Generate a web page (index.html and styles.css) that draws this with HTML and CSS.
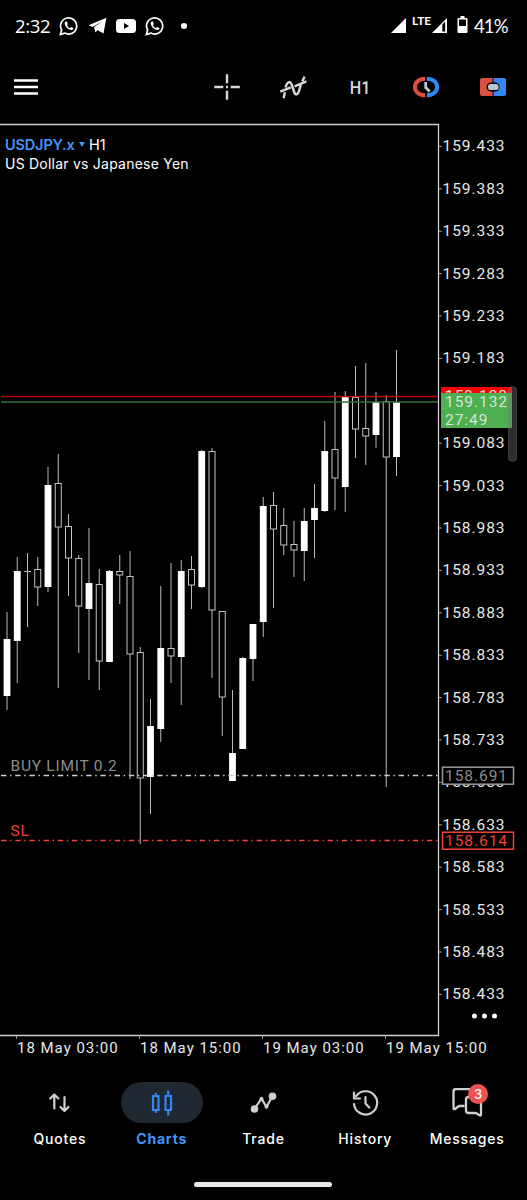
FILE: index.html
```html
<!DOCTYPE html>
<html lang="en">
<head>
    <meta charset="UTF-8">
    <meta name="viewport" content="width=device-width, initial-scale=1.0">
    <title>USDJPY.x H1</title>
    <link rel="stylesheet" href="styles.css">
</head>
<body>
    <div class="status-bar">
        <span class="clock">2:32</span>
        <svg class="whatsapp" width="20" height="20" viewBox="0 0 20 20"><path d="M1.4 18.4l1.2-4.4a8.1 8.1 0 1 1 3.2 3.1z" fill="none" stroke="#fff" stroke-width="1.7"/><path d="M7 5.4c-.9.3-1.5 1.2-1.3 2.3.6 3.3 3.2 5.8 6.4 6.4 1.2.1 2.2-.6 2.4-1.5l-.1-.7-2.2-1-1.2 1.2c-1.5-.6-2.5-1.6-3.1-2.9l.9-1.2-.9-2.4z" fill="#fff"/></svg>
        <svg class="telegram" width="19" height="18" viewBox="0 0 19 18"><path d="M.5 8.3L18.4.7 15.5 16.5 9.5 12.9 7.5 15.5 6 10.3 14 4.5 4.6 10z" fill="#fff"/></svg>
        <svg class="youtube" width="20" height="14" viewBox="0 0 20 14"><rect width="20" height="14" rx="3.5" fill="#fff"/><path d="M8 4l5 3-5 3z" fill="#000"/></svg>
        <svg class="whatsapp" width="20" height="20" viewBox="0 0 20 20"><path d="M1.4 18.4l1.2-4.4a8.1 8.1 0 1 1 3.2 3.1z" fill="none" stroke="#fff" stroke-width="1.7"/><path d="M7 5.4c-.9.3-1.5 1.2-1.3 2.3.6 3.3 3.2 5.8 6.4 6.4 1.2.1 2.2-.6 2.4-1.5l-.1-.7-2.2-1-1.2 1.2c-1.5-.6-2.5-1.6-3.1-2.9l.9-1.2-.9-2.4z" fill="#fff"/></svg>
        <span class="more-dot"></span>
        <div class="status-right">
            <svg width="15" height="15" viewBox="0 0 15 15"><path d="M0 15L15 0v15z" fill="#fff"/></svg>
            <span class="lte">LTE</span>
            <svg width="15" height="15" viewBox="0 0 15 15"><path d="M0 15L15 0v15z" fill="#fff"/><path d="M10.3 6.500L13.200 3.600V13.500H10.300z" fill="#000"/></svg>
            <svg class="battery" width="11" height="17" viewBox="0 0 11 17"><path d="M3.500 0h4v2H9.500Q10.500 2 10.500 3V16Q10.500 17 9.500 17H1.500Q.5 17 .5 16V3Q.5 2 1.500 2h2z" fill="#fff"/><path d="M2 3.500h7V10H2z" fill="#000"/></svg>
            <span class="percent">41%</span>
        </div>
    </div>

    <div class="toolbar">
        <svg width="24" height="28" viewBox="0 0 24 28"><path d="M0 7.500h24M0 14h24M0 20.500h24" stroke="#fff" stroke-width="2.400"/></svg>
        <div class="tools">
            <svg width="28" height="28" viewBox="0 0 28 28"><path d="M14 1.200v9.100M14 17.700v9.100M1.200 14h9.100M17.700 14h9.100M13 14h2" stroke="#d8d8d8" stroke-width="2.400"/></svg>
            <svg width="28" height="28" viewBox="0 0 28 28" fill="none" stroke="#d8d8d8" stroke-width="2.400"><path d="M4.600 25.200l1.300-6M6.500 14.500C8.500 8 11.300 7.500 13 12.500L15 18.500c1.600 4.500 4 3.500 5.300-1.500l1.500-5.500M23.200 8.300l2.500-4.700M1.300 18.600l10.500-4.200M15.600 13.300l11.800-4.900"/></svg>
            <span class="period">H1</span>
            <svg width="28" height="28" viewBox="0 0 28 28" fill="none"><path d="M13.200 5.800C-.5 5.800-.5 22.200 13.200 22.200" stroke="#dc5043" stroke-width="4"/><path d="M14.800 5.800C28.500 5.800 28.500 22.200 14.800 22.200" stroke="#3187f3" stroke-width="4"/><path d="M13.700 9v5.600l4 4" stroke="#b8c6ce" stroke-width="2.800"/></svg>
            <svg width="28" height="28" viewBox="0 0 28 28"><path d="M3 5h10.500v18H3q-2 0-2-2V7q0-2 2-2z" fill="#dc5043"/><path d="M14.500 5H25q2 0 2 2v14q0 2-2 2H14.500z" fill="#3187f3"/><rect x="7.500" y="9.500" width="13" height="9" rx="4.500" fill="#000"/><rect x="9" y="11" width="10.500" height="6" rx="2.500" fill="#b8c6ce"/></svg>
        </div>
    </div>

    <div class="chart">
        <svg id="plot" width="527" height="948" viewBox="0 122 527 948">
            <g id="candles"></g>
            <path class="ask-line" d="M1 396.500h437"/>
            <path class="bid-line" d="M1 402h437"/>
            <path class="limit-line" d="M1 775.500h437"/>
            <path class="sl-line" d="M1 840.500h437"/>
            <text class="order name" x="10.500" y="771">BUY LIMIT 0.2</text>
            <text class="order name sl" x="10.500" y="836">SL</text>
            <path class="frame" d="M0 124.500h438.500v911H0"/>
            <g id="prices"></g>
            <g id="times"></g>
            <rect x="441" y="387" width="71" height="20" fill="#f00"/>
            <text class="tag" x="445" y="401">159.138</text>
            <rect x="441" y="393" width="71" height="35" fill="#4caf50"/>
            <text class="tag" x="445" y="407">159.132</text>
            <text class="tag" x="445" y="424.500">27:49</text>
            <rect x="442.500" y="767.200" width="71" height="17" fill="#000" stroke="#999" stroke-width="1.500"/>
            <text class="order" x="445" y="781">158.691</text>
            <rect x="442.500" y="832.200" width="71" height="17" fill="#000" stroke="#f44336" stroke-width="1.500"/>
            <text class="order sl" x="445" y="846">158.614</text>
            <rect x="508.500" y="386.500" width="8" height="75" rx="4" fill="#777" fill-opacity=".38" stroke="#777" stroke-opacity=".4"/>
            <g fill="#fff"><circle cx="474.500" cy="1016" r="2.500"/><circle cx="484.500" cy="1016" r="2.500"/><circle cx="494.500" cy="1016" r="2.500"/></g>
        </svg>
        <div class="symbol">
            <div><b>USDJPY.x</b><i></i><span>H1</span></div>
            <div class="description">US Dollar vs Japanese Yen</div>
        </div>
    </div>

    <nav class="tabs">
        <div class="tab">
            <div class="icon"><svg width="30" height="30" viewBox="0 0 30 30" fill="none" stroke="#d0d0d0" stroke-width="2.200" stroke-linecap="round" stroke-linejoin="round"><path d="M9.300 20.500V7M5.300 10.500l4-4 4 4M19.500 9v13.500M15.500 19l4 4 4-4"/></svg></div>
            <span>Quotes</span>
        </div>
        <div class="tab active">
            <div class="icon"><svg width="30" height="30" viewBox="0 0 30 30" fill="none" stroke="#3187f3" stroke-width="2.200"><path d="M6 8h5.500v14H6zM18.500 8h5.500v14h-5.500zM8.750 5v3M8.750 22v3M21.250 2.500v5.500M21.250 22v5.500"/></svg></div>
            <span>Charts</span>
        </div>
        <div class="tab">
            <div class="icon"><svg width="30" height="30" viewBox="0 0 30 30" fill="none" stroke="#d0d0d0" stroke-width="2.200"><path d="M6.500 21L13.500 10.500l5 8.500 5.500-10"/><g fill="#d0d0d0" stroke="none"><circle cx="6.500" cy="21" r="3.800"/><circle cx="24.500" cy="8.200" r="3.800"/><circle cx="13.500" cy="11" r="2"/><circle cx="18.500" cy="18.500" r="2"/></g></svg></div>
            <span>Trade</span>
        </div>
        <div class="tab">
            <div class="icon"><svg width="30" height="30" viewBox="0 0 30 30" fill="none" stroke="#d0d0d0" stroke-width="2.200" stroke-linecap="round" stroke-linejoin="round"><path d="M4 16A11.600 11.600 0 1 0 6.200 8M4 4.500v6h6M15.500 9V15.500l3.700 4"/></svg></div>
            <span>History</span>
        </div>
        <div class="tab">
            <div class="icon"><svg width="34" height="30" viewBox="0 0 34 30" fill="none" stroke="#d0d0d0" stroke-width="2.300" stroke-linejoin="round"><path d="M14.500 18H9l-4 3q-1.500.7-1.500-1V3.500q0-2.500 2.500-2.500H20.500M31 13.500v13q0 1.500-1.500.7L26 25H18.500q-2.500 0-2.500-2.500V11.500q0-2.500 2.500-2.500H28.500q2.500 0 2.500 2.500"/></svg><em>3</em></div>
            <span>Messages</span>
        </div>
    </nav>
    <div class="home-bar"></div>

    <script src="script.js"></script>
</body>
</html>
```

FILE: styles.css
```css
body {
    margin: 0;
    width: 527px;
    height: 1200px;
    overflow: hidden;
    display: flex;
    flex-direction: column;
    background-color: #000;
    color: #fff;
    font-family: Inter, "Open Sans", sans-serif;
}
svg {
    display: block;
    flex: none;
}
.status-bar {
    height: 50px;
    display: flex;
    align-items: center;
    padding: 1px 20px 0 15px;
    box-sizing: border-box;
}
.clock {
    width: 36px;
    margin-right: 8px;
    font-family: "Open Sans", sans-serif;
    font-size: 18.5px;
    letter-spacing: -0.3px;
}
.telegram {
    margin-left: 9px;
}
.youtube {
    margin: 0 9px 0 9px;
}
.more-dot {
    width: 6px;
    height: 6px;
    margin-left: 16px;
    border-radius: 50%;
    background-color: #fff;
}
.status-right {
    margin-left: auto;
    display: flex;
    align-items: center;
}
.lte {
    width: 20px;
    margin: -9px 0 0 6px;
    font-family: Lato, sans-serif;
    font-size: 12px;
    font-weight: bold;
    line-height: 12px;
}
.battery {
    margin: 0 6px 2px 10px;
}
.percent {
    width: 33px;
    font-family: Lato, sans-serif;
    font-size: 18.5px;
    letter-spacing: -0.9px;
}
.toolbar {
    height: 72px;
    display: flex;
    align-items: center;
    justify-content: space-between;
    padding: 2px 20px 0 14px;
    box-sizing: border-box;
}
.tools {
    display: flex;
    align-items: center;
    gap: 38.6px;
}
.period {
    width: 28px;
    text-align: center;
    font-family: Roboto, sans-serif;
    font-size: 19px;
    font-weight: 500;
    color: #d8d8d8;
    transform: scaleX(0.85);
}

/* chart */
.chart {
    position: relative;
    height: 948px;
}
#plot text {
    font-family: Roboto, sans-serif;
    font-size: 15.5px;
    letter-spacing: 0.95px;
    fill: #e8e8e8;
}
#plot #times text {
    font-size: 15px;
    letter-spacing: 0.98px;
}
#plot .order {
    fill: #8c8c8c;
}
#plot .name {
    letter-spacing: 0.75px;
}
#plot .sl {
    fill: #ea4034;
}
#plot .tag {
    fill: #d9e3da;
}
.frame {
    fill: none;
    stroke: #d0d0d0;
    stroke-width: 1.3;
}
.tick {
    stroke: #999;
}
.wick {
    stroke: #bbb;
    stroke-width: 1;
}
.up {
    fill: #fff;
}
.down {
    fill: #000;
    stroke: #c4c4c4;
    stroke-width: 1;
}
.ask-line {
    stroke: #b40000;
    stroke-width: 1.3;
}
.bid-line {
    stroke: #2e7032;
    stroke-width: 1.3;
}
.limit-line, .sl-line {
    stroke: #ccc;
    stroke-width: 1.4;
    stroke-dasharray: 5.4 3.7 1.4 3.7;
}
.sl-line {
    stroke: #f44336;
}
.symbol {
    position: absolute;
    left: 5px;
    top: 13px;
    font-size: 14.5px;
    line-height: 19px;
    white-space: nowrap;
}
.symbol > div {
    display: flex;
    align-items: center;
}
.symbol b {
    width: 70px;
    color: #4396fa;
    font-weight: 600;
    letter-spacing: -0.15px;
}
.symbol i {
    margin: 0 4px;
    border: 3px solid transparent;
    border-top: 5px solid #4396fa;
    border-bottom: 0;
}
.symbol .description {
    font-size: 14px;
    letter-spacing: 0.23px;
}

/* bottom navigation */
.tabs {
    height: 100px;
    display: flex;
    padding: 12px 9px 0;
    box-sizing: border-box;
}
.tab {
    flex: 1;
    display: flex;
    flex-direction: column;
    align-items: center;
    font-size: 14px;
    font-weight: 500;
    letter-spacing: 0.8px;
}
.icon {
    position: relative;
    width: 82px;
    height: 41px;
    margin-bottom: 7px;
    border-radius: 21px;
    display: flex;
    align-items: center;
    justify-content: center;
}
.active {
    color: #4396fa;
    font-weight: 700;
}
.active .icon {
    background-color: #202832;
}
.icon em {
    position: absolute;
    left: 42px;
    top: 2px;
    width: 20px;
    height: 20px;
    border-radius: 50%;
    background-color: #ef5350;
    font-size: 13px;
    font-style: normal;
    line-height: 21px;
    text-align: center;
    letter-spacing: 0;
}
.home-bar {
    width: 138px;
    height: 5px;
    margin: 12px 0 0 194px;
    border-radius: 3px;
    background-color: #e8e8e8;
}
```

FILE: script.js
```js
// high, low, body top, body bottom, 1 = up
const candles = [
    [612, 710, 639, 696, 1], [557, 683, 571, 641, 1], [553, 627, 571, 572, 0],
    [557, 606, 569, 587, 0], [467, 592, 485, 587, 1], [454, 688, 483, 527, 0],
    [514, 596, 526, 558, 0], [555, 653, 558, 606, 0], [528, 680, 583, 609, 1],
    [569, 690, 584, 661, 0], [570, 662, 571, 662, 1], [555, 604, 571, 575, 0],
    [551, 779, 576, 654, 0], [647, 844, 652, 778, 0], [699, 814, 726, 777, 1],
    [586, 742, 648, 729, 1], [563, 683, 648, 656, 0], [560, 705, 571, 657, 1],
    [556, 609, 569, 585, 0], [450, 588, 451, 587, 1], [448, 678, 451, 610, 0],
    [611, 736, 611, 697, 0], [690, 781, 753, 781, 1], [657, 749, 658, 749, 1],
    [624, 681, 624, 659, 1], [497, 637, 506, 622, 1], [492, 608, 505, 529, 0],
    [508, 555, 525, 545, 0], [521, 577, 544, 550, 0], [508, 581, 521, 551, 1],
    [484, 558, 508, 520, 1], [421, 512, 451, 511, 1], [392, 510, 449, 478, 0],
    [391, 512, 396, 487, 1], [366, 458, 397, 429, 0], [363, 465, 428, 436, 0],
    [392, 448, 402, 435, 1], [395, 787, 401, 457, 0], [350, 476, 402, 457, 1]
];

let html = '';
candles.forEach(([high, low, top, bottom, up], i) => {
    const x = 7 + i * 10.25;
    html += `<path class="wick" d="M${x} ${high}V${low}"/>`;
    if (up) {
        html += `<rect class="up" x="${x - 3.4}" y="${top}" width="6.8" height="${bottom - top}"/>`;
    } else if (bottom - top < 2) {
        html += `<path class="wick" d="M${x - 3.4} ${top + 0.5}h6.8"/>`;
    } else {
        html += `<rect class="down" x="${x - 3}" y="${top + 0.5}" width="6" height="${bottom - top - 0.5}"/>`;
    }
});
document.getElementById('candles').innerHTML = html;

html = '';
for (let i = 0; i < 21; i++) {
    if (i === 6) continue; // hidden behind the bid tag
    const y = 146.4 + i * 42.4;
    html += `<path class="tick" d="M439 ${y}h3"/><text x="442.5" y="${y + 5}">${(159.433 - i * 0.05).toFixed(3)}</text>`;
}
document.getElementById('prices').innerHTML = html;

html = '';
['18 May 03:00', '18 May 15:00', '19 May 03:00', '19 May 15:00'].forEach((label, i) => {
    const x = 16.5 + i * 123;
    html += `<path class="tick" d="M${x} 1036v3"/><text x="${x + 0.5}" y="1053">${label}</text>`;
});
document.getElementById('times').innerHTML = html;
```
